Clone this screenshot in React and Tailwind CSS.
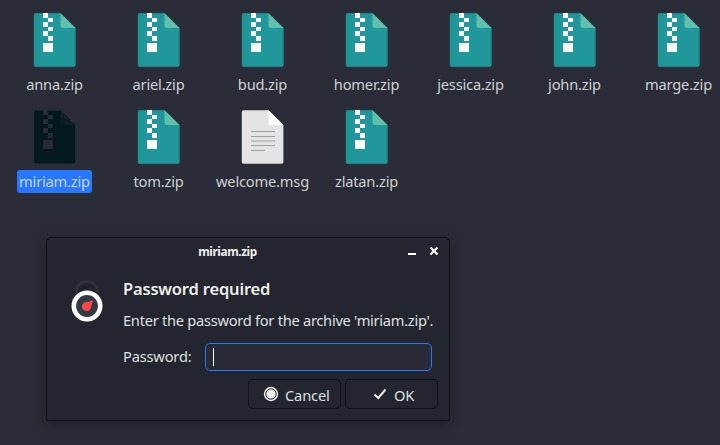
import React from 'react';

function ZipIcon({ dim }) {
  const body = dim ? '#04191d' : '#1f979b';
  const fold = dim ? '#0e2025' : '#5fc0ac';
  const zip = dim ? '#282a35' : '#ffffff';
  return (
    <svg width="42" height="54" viewBox="0 0 42 54" className="block overflow-visible">
      <path d="M1.700 .3H26.500L41.400 15V52Q41.400 53.700 39.700 53.700H1.700Q0 53.700 0 52V2Q0 .3 1.700 .3Z" fill={body} stroke={dim ? '#12343a' : '#267e84'} strokeWidth=".6" />
      <path d="M26.500 .3L41.400 15H28.500Q26.500 15 26.500 13Z" fill={fold} />
      <g fill={zip} shapeRendering="crispEdges">
        <path d="M9 0h5v5h-5zM14 5h5v4h-5zM9 9h5v5h-5zM14 14h5v4h-5zM9 18h5v5h-5zM14 23h5v5h-5z" />
        <path d="M9 30h10v9H9z" />
      </g>
    </svg>
  );
}

function MessageIcon() {
  return (
    <svg width="42" height="54" viewBox="0 0 42 54" className="block overflow-visible">
      <path d="M1.700 .3H26.500L41.400 15V52Q41.400 53.700 39.700 53.700H1.700Q-.2 53.700 -.2 52V2Q-.2 .3 1.700 .3Z" fill="#e4e4e4" />
      <path d="M26.500 .3L41.400 15H28.500Q26.500 15 26.500 13Z" fill="#fff" />
      <path d="M9 21.500H33M9 26.500H33M9 31H33M9 35.500H33M9 40.500H23" stroke="#a0a0a0" />
    </svg>
  );
}

const files = [
  { name: 'anna.zip' },
  { name: 'ariel.zip' },
  { name: 'bud.zip' },
  { name: 'homer.zip' },
  { name: 'jessica.zip' },
  { name: 'john.zip' },
  { name: 'marge.zip' },
  { name: 'miriam.zip', selected: true },
  { name: 'tom.zip' },
  { name: 'welcome.msg', message: true },
  { name: 'zlatan.zip' },
];

function File({ name, selected, message }) {
  return (
    <div className="flex h-[97px] flex-col items-center">
      {message ? <MessageIcon /> : <ZipIcon dim={selected} />}
      <span className={selected
        ? 'mt-[6px] mr-px h-[23px] w-[75px] rounded-[3px] bg-[#2777ff] text-center leading-[23px] tracking-[-0.2px] whitespace-nowrap text-[#c9d4ea]'
        : 'mt-[6px] mr-px h-[23px] leading-[23px] tracking-[-0.2px] whitespace-nowrap text-[#cfd1d3]'}>
        {name}
      </span>
    </div>
  );
}

function PadlockIcon() {
  return (
    <svg width="32" height="44" viewBox="0 0 32 44" className="block">
      <path d="M5.500 18V11.500A10.500 10 0 0 1 26.500 11.500V18" fill="#20222d" stroke="#2e303e" strokeWidth="3.200" />
      <circle cx="16" cy="26" r="13.200" fill="#333c46" stroke="#fff" strokeWidth="4.600" />
      <path d="M22 20L20.200 26.800A4.600 4.600 0 1 1 15.400 21.900Q18.500 22 22 20Z" fill="#ff4545" />
    </svg>
  );
}

export default function App() {
  return (
    <div className="relative h-[445px] w-[720px] overflow-hidden bg-[#2a2c37] font-['Noto_Sans',sans-serif] text-[14.67px]">
      <div className="grid w-[731px] grid-cols-7 pt-[13px] pl-[3px]">
        {files.map((f) => <File key={f.name} {...f} />)}
      </div>
      <section className="absolute top-[237px] left-[46px] flex h-[184px] w-[404px] flex-col rounded-t-[5px] rounded-b-[2px] border border-[#101218] bg-[#23262e] text-[#dfe0e2] shadow-[0_3px_14px_rgba(0,0,0,0.3)]">
        <header className="flex h-[28px] items-center pr-[10px]">
          <h1 className="-mt-[2px] flex-1 text-center text-[11.8px] leading-[26px] font-bold tracking-[-0.4px] text-[#f0f0f0]">miriam.zip</h1>
          <svg width="31" height="10" viewBox="0 0 31 10" className="block -mt-[3px]" stroke="#fff" fill="none">
            <path d="M0 8H8" strokeWidth="2" />
            <path d="M22.500 1.500L29.500 8.500M29.500 1.500L22.500 8.500" strokeWidth="2.200" />
          </svg>
        </header>
        <div className="flex pl-[24px]">
          <div className="w-[52px] pt-[14px]"><PadlockIcon /></div>
          <div className="flex-1 pt-[11px]">
            <h2 className="h-[24px] text-[16.5px] leading-[24px] font-semibold tracking-[-0.18px] whitespace-nowrap text-[#eeeeec]">Password required</h2>
            <p className="mt-[7px] h-[24px] leading-[24px] tracking-[-0.28px] whitespace-nowrap">Enter the password for the archive 'miriam.zip'.</p>
            <div className="mt-[11px] flex h-[28px]">
              <label className="w-[82px] leading-[26px] tracking-[-0.2px]">Password:</label>
              <div className="flex w-[227px] items-center rounded-[5px] border border-[#2777ff] bg-[#282a35] pl-[7px]">
                <div className="h-[18px] w-px bg-white" />
              </div>
            </div>
          </div>
        </div>
        <footer className="mt-[8px] flex justify-end gap-[4px] pr-[11px] tracking-[-0.15px]">
          <button className="flex h-[30px] w-[93px] items-center rounded-[5px] border border-[#101218] pl-[14px]">
            <svg width="16" height="16" viewBox="0 0 16 16">
              <circle cx="8" cy="8" r="7.200" fill="#eee" />
              <circle cx="8" cy="8" r="5.200" fill="none" stroke="#23262e" strokeWidth="1" />
            </svg>
            <span className="mt-[2px] ml-[6px]">Cancel</span>
          </button>
          <button className="flex h-[30px] w-[93px] items-center rounded-[5px] border border-[#101218] pl-[26px]">
            <svg width="16" height="16" viewBox="0 0 16 16" fill="none" stroke="#eee" strokeWidth="2"><path d="M2.500 8.500L6.300 12L13.500 3.500" /></svg>
            <span className="mt-[2px] ml-[6px]">OK</span>
          </button>
        </footer>
      </section>
    </div>
  );
}
